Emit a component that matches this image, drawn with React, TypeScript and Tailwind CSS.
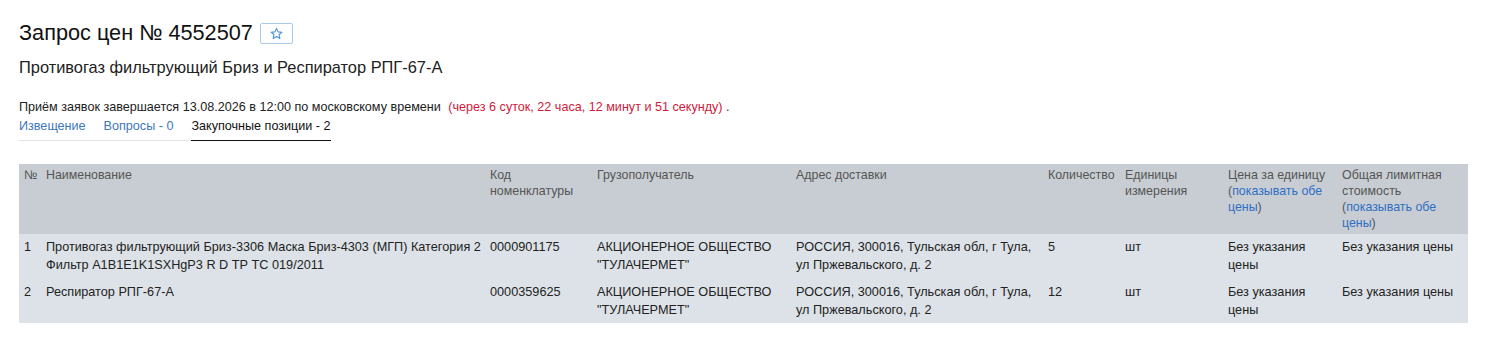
import React from 'react';

const font = { fontFamily: '"Liberation Sans", Arial, sans-serif' };

interface Row {
  num: string;
  name: string[];
  code: string;
  consignee: string[];
  address: string[];
  qty: string;
  unit: string;
}

const rows: Row[] = [
  {
    num: '1',
    name: ['Противогаз фильтрующий Бриз-3306 Маска Бриз-4303 (МГП) Категория 2', 'Фильтр A1B1E1K1SXHgP3 R D ТР ТС 019/2011'],
    code: '0000901175',
    consignee: ['АКЦИОНЕРНОЕ ОБЩЕСТВО', '"ТУЛАЧЕРМЕТ"'],
    address: ['РОССИЯ, 300016, Тульская обл, г Тула,', 'ул Пржевальского, д. 2'],
    qty: '5',
    unit: 'шт',
  },
  {
    num: '2',
    name: ['Респиратор РПГ-67-А'],
    code: '0000359625',
    consignee: ['АКЦИОНЕРНОЕ ОБЩЕСТВО', '"ТУЛАЧЕРМЕТ"'],
    address: ['РОССИЯ, 300016, Тульская обл, г Тула,', 'ул Пржевальского, д. 2'],
    qty: '12',
    unit: 'шт',
  },
];

function Lines({ items }: { items: string[] }) {
  return (
    <>
      {items.map((t, i) => (
        <div key={i} className="whitespace-nowrap">{t}</div>
      ))}
    </>
  );
}

function StarIcon() {
  return (
    <svg width="13" height="13" viewBox="0 0 24 24" fill="none" stroke="#4a90d9" strokeWidth="2" strokeLinejoin="round">
      <polygon points="12,2.5 14.9,9 22,9.6 16.6,14.3 18.2,21.3 12,17.6 5.8,21.3 7.4,14.3 2,9.6 9.1,9" />
    </svg>
  );
}

export default function App() {
  const th = 'align-top text-left font-normal px-[5px] pt-[3px] pb-[3px] text-[12.4px] leading-[16px] text-[#555]';
  const td = 'align-top text-left px-[5px] pt-[4px] pb-[4px] text-[12.7px] leading-[18px] text-[#222]';

  return (
    <div className="bg-white w-[1488px] h-[349px] pl-[19px] pr-[20px] pt-[20px]" style={font}>
      {/* Title */}
      <div className="flex items-center h-[26px]">
        <h1 className="text-[21.7px] leading-[26px] text-[#111]">Запрос цен № 4552507</h1>
        <button className="ml-[7px] w-[33px] h-[21px] border border-[#a9cbe9] rounded-[2px] flex items-center justify-center bg-white">
          <StarIcon />
        </button>
      </div>

      <div className="mt-[11px] text-[16.4px] leading-[20px] text-[#222]">
        Противогаз фильтрующий Бриз и Респиратор РПГ-67-А
      </div>

      <div className="mt-[22px] text-[12.6px] leading-[16px] text-[#222] whitespace-nowrap">
        Приём заявок завершается 13.08.2026 в 12:00 по московскому времени{' '}
        <span className="text-[#d2193c] ml-[4px]">(через 6 суток, 22 часа, 12 минут и 51 секунду)</span> .
      </div>

      {/* Tabs */}
      <div className="mt-[3px] flex w-fit gap-[18px] border-b border-[#e2e2e2] text-[12.6px] leading-[16px]">
        <span className="pb-[6px] text-[#3d78bd]">Извещение</span>
        <span className="pb-[6px] text-[#3d78bd]">Вопросы - 0</span>
        <span className="pb-[6px] text-[#111] border-b border-[#111] -mb-px">Закупочные позиции - 2</span>
      </div>

      {/* Table */}
      <table className="mt-[23px] w-[1449px] border-collapse table-fixed">
        <colgroup>
          <col className="w-[22px]" />
          <col className="w-[444px]" />
          <col className="w-[107px]" />
          <col className="w-[199px]" />
          <col className="w-[252px]" />
          <col className="w-[77px]" />
          <col className="w-[103px]" />
          <col className="w-[114px]" />
          <col className="w-[131px]" />
        </colgroup>
        <thead>
          <tr className="bg-[#c8cdd3] h-[70px]">
            <th className={th}>№</th>
            <th className={th}>Наименование</th>
            <th className={th}>Код<br />номенклатуры</th>
            <th className={th}>Грузополучатель</th>
            <th className={th}>Адрес доставки</th>
            <th className={th}>Количество</th>
            <th className={th}>Единицы<br />измерения</th>
            <th className={th}>
              Цена за единицу<br />(<span className="text-[#2f6fc4]">показывать обе</span><br />
              <span className="text-[#2f6fc4]">цены</span>)
            </th>
            <th className={th}>
              Общая лимитная<br />стоимость<br />(<span className="text-[#2f6fc4]">показывать обе</span><br />
              <span className="text-[#2f6fc4]">цены</span>)
            </th>
          </tr>
        </thead>
        <tbody>
          {rows.map((r, i) => (
            <tr key={r.num} className={`bg-[#dde2e8] ${i === 0 ? 'h-[45px]' : 'h-[44px]'}`}>
              <td className={td}>{r.num}</td>
              <td className={td}><Lines items={r.name} /></td>
              <td className={td}>{r.code}</td>
              <td className={td}><Lines items={r.consignee} /></td>
              <td className={td}><Lines items={r.address} /></td>
              <td className={td}>{r.qty}</td>
              <td className={td}>{r.unit}</td>
              <td className={td}>Без указания<br />цены</td>
              <td className={td}><span className="whitespace-nowrap">Без указания цены</span></td>
            </tr>
          ))}
        </tbody>
      </table>
    </div>
  );
}
